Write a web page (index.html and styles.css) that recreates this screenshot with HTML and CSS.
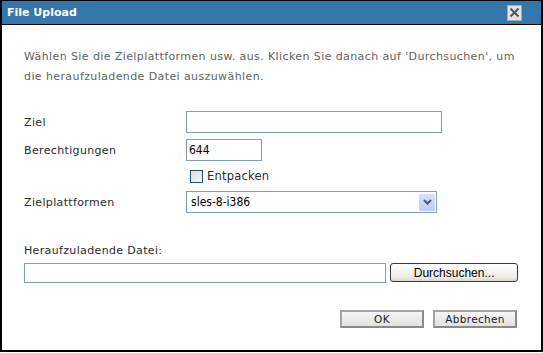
FILE: index.html
```html
<!DOCTYPE html>
<html lang="de">
<head>
<meta charset="utf-8">
<title>File Upload</title>
<link rel="stylesheet" href="styles.css">
</head>
<body>
<div class="dialog">
  <div class="titlebar">
    <span class="title">File Upload</span>
    <span class="close">
      <svg width="11" height="11" viewBox="0 0 11 11"><path d="M1.5 1.5 L9.5 9.5 M9.5 1.5 L1.5 9.5" stroke="#555" stroke-width="2" fill="none"/></svg>
    </span>
  </div>
  <div class="content">
    <p class="intro">Wählen Sie die Zielplattformen usw. aus. Klicken Sie danach auf 'Durchsuchen', um die heraufzuladende Datei auszuwählen.</p>
    <div class="form">
      <label class="label">Ziel</label>
      <div class="field"><span class="input input-wide"></span></div>
      <label class="label">Berechtigungen</label>
      <div class="field"><span class="input input-short">644</span></div>
      <span></span>
      <div class="field check-row"><span class="checkbox"></span><span class="check-label">Entpacken</span></div>
      <label class="label">Zielplattformen</label>
      <div class="field">
        <span class="select"><span class="select-text">sles-8-i386</span><span class="select-btn"><svg width="9" height="6" viewBox="0 0 9 6"><path d="M1 1 L4.5 4.5 L8 1" stroke="#4a5a78" stroke-width="2" fill="none"/></svg></span></span>
      </div>
    </div>
    <div class="file-label">Heraufzuladende Datei:</div>
    <div class="file-row">
      <span class="input input-file"></span>
      <span class="browse">Durchsuchen...</span>
    </div>
    <div class="actions">
      <span class="btn">OK</span>
      <span class="btn">Abbrechen</span>
    </div>
  </div>
</div>
</body>
</html>
```
FILE: styles.css
```css
html, body { margin: 0; padding: 0; background: #fff; }
body { width: 543px; height: 353px; overflow: hidden; font-family: "DejaVu Sans", Verdana, sans-serif; }
.dialog {
  width: 543px; height: 352px; box-sizing: border-box;
  border: 2px solid #000; border-top-width: 1px;
  display: flex; flex-direction: column; background: #fff;
}
.titlebar {
  height: 23px; background: #3576ab; border-bottom: 1px solid #000;
  display: flex; align-items: center; justify-content: space-between;
  padding: 0 19px 0 5px; flex-shrink: 0;
}
.title { color: #fff; font-weight: bold; font-size: 11px; }
.close {
  width: 13px; height: 14px; background: #e4e4e4; border: 1px solid #a9a9a9;
  display: flex; align-items: center; justify-content: center;
}
.content { padding: 22px 23px 0 22px; flex: 1; display: flex; flex-direction: column; }
.intro { margin: 0; color: #626262; font-size: 11px; line-height: 20px; letter-spacing: 0.4px; max-width: 496px; }
.form {
  margin-top: 24px; display: grid; grid-template-columns: 162px 1fr;
  row-gap: 6px; align-items: center;
}
.label { color: #2a2a2a; font-size: 11px; letter-spacing: 0.35px; }
.field { display: flex; align-items: center; }
.input {
  box-sizing: border-box; height: 22px; border: 1px solid #7f9db9; background: #fff;
  font-size: 12px; color: #000; display: flex; align-items: center; padding-left: 2px;
  font-family: "DejaVu Sans Condensed", "DejaVu Sans", sans-serif;
}
.input-wide { width: 256px; }
.input-short { width: 76px; }
.check-row { height: 18px; padding-left: 4px; }
.checkbox {
  width: 11px; height: 11px; border: 1px solid #1c5180;
  background: linear-gradient(135deg, #dcdcd6, #f6f6f4);
}
.check-label { margin-left: 4px; color: #2a2a2a; font-size: 11.5px; letter-spacing: 0.2px; }
.select {
  box-sizing: border-box; width: 251px; height: 22px; border: 1px solid #7f9db9;
  display: flex; align-items: center; justify-content: space-between; padding: 1px 1px 1px 4px;
}
.select-text { font-size: 12px; color: #000; font-family: "DejaVu Sans Condensed", "DejaVu Sans", sans-serif; }
.select-btn {
  width: 16px; height: 17px; background: linear-gradient(#d4e0fb, #bccef5);
  display: flex; align-items: center; justify-content: center; border-radius: 1px;
}
.file-label { margin-top: 29px; color: #2a2a2a; font-size: 11px; line-height: 18px; letter-spacing: 0.35px; }
.file-row { margin-top: 3px; display: flex; align-items: flex-start; gap: 4px; }
.input-file { width: 363px; height: 20px; }
.browse {
  box-sizing: border-box; width: 128px; height: 19px; border: 1px solid #333a48; border-radius: 3px;
  background: linear-gradient(#ffffff, #ecebe6 80%, #d8d6cc);
  font-family: "Liberation Sans", Arial, sans-serif; font-size: 12px; color: #000;
  display: flex; align-items: center; justify-content: center;
}
.actions { margin-top: 27px; display: flex; justify-content: flex-end; gap: 9px; padding-right: 1px; }
.btn {
  box-sizing: border-box; width: 84px; height: 18px;
  border: 2px solid #8a8a8a; border-top-color: #a4a4a4; border-left-color: #a4a4a4;
  background: linear-gradient(#f6f6f6, #e2e2e2);
  font-size: 10.5px; color: #222; display: flex; align-items: center; justify-content: center;
  letter-spacing: 0.3px;
}
```
